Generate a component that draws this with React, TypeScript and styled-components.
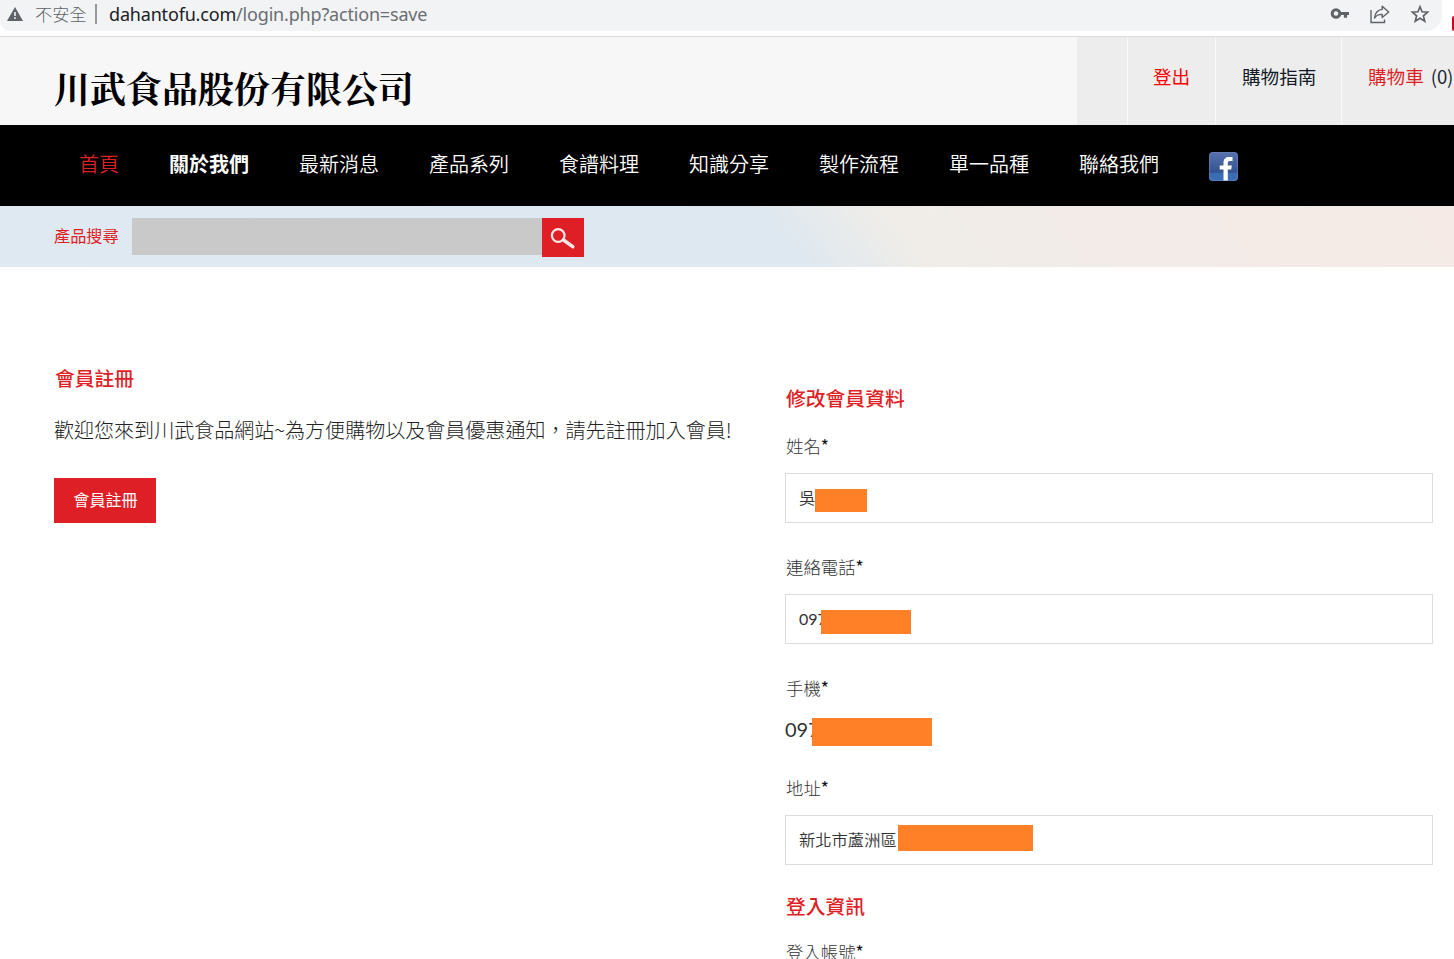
import React from "react";
import styled, { createGlobalStyle } from "styled-components";

const GlobalStyle = createGlobalStyle`
  * { box-sizing: border-box; }
  html, body { margin: 0; padding: 0; }
  body {
    width: 1454px;
    height: 959px;
    overflow: hidden;
    background: #fff;
    color: #333;
    font-family: Lato, "Noto Sans CJK TC", sans-serif;
    font-size: 20px;
  }
`;

const RED = "#df1f26";

const Page = styled.div`
  width: 1454px;
  height: 959px;
  overflow: hidden;
  display: flex;
  flex-direction: column;
`;

const BrowserBar = styled.div`
  height: 37px;
  flex: none;
  display: flex;
  background: #fff;
  border-bottom: 1px solid #d9dadb;
  overflow: hidden;
`;

const AddressBar = styled.div`
  width: 1442px;
  height: 31px;
  display: flex;
  align-items: center;
  padding: 0 12px 4px 7px;
  background: #f1f3f4;
  border-radius: 0 0 16px 10px;
`;

const Insecure = styled.span`
  margin-left: 12px;
  font: 300 17.2px/24px "Noto Sans CJK TC", sans-serif;
  color: #5f6368;
  width: 53px;
  white-space: nowrap;
`;

const Divider = styled.i`
  width: 2px;
  height: 20px;
  margin: 0 12px 0 7px;
  background: #96999c;
`;

const Url = styled.span`
  flex: 1;
  font: 400 18px/24px "Noto Sans", sans-serif;
  letter-spacing: -0.18px;
  color: #6b6e72;
  b { font-weight: 400; color: #202124; }
`;

const BarIcons = styled.div`
  display: flex;
  align-items: center;
  gap: 20px;
  color: #5f6368;
`;

const ExtensionEdge = styled.i`
  width: 2px;
  height: 15px;
  margin: 16px 0 0 auto;
  border-radius: 2px 0 0 2px;
  background: #d0021b;
`;

const Header = styled.header`
  height: 88px;
  flex: none;
  display: flex;
  justify-content: space-between;
  background: #f7f7f7;
`;

const Logo = styled.h1`
  margin: 0;
  padding: 25px 0 0 54px;
  font: 700 36px/52px "Noto Serif CJK TC", "Noto Sans CJK TC", serif;
  color: #000;
  white-space: nowrap;
`;

const TopLinks = styled.div`
  width: 377px;
  display: flex;
  background: #ededed;
  overflow: hidden;
`;

const TopLink = styled.a<{ $width: number; $color?: string }>`
  flex: 0 0 ${(p) => p.$width}px;
  padding: 25px 0 0 ${(p) => (p.$width === 88 ? 25 : 26)}px;
  border-left: ${(p) => (p.$color ? "1px solid #f9f9f9" : "0")};
  font: 400 18.6px/28px "Noto Sans CJK TC", sans-serif;
  color: ${(p) => p.$color};
  white-space: nowrap;
`;

const CartCount = styled.span`
  margin-left: 7px;
  color: #1d2733;
  letter-spacing: -0.2px;
`;

const Nav = styled.nav`
  height: 81px;
  flex: none;
  display: flex;
  padding-left: 54px;
  background: #000;
`;

const NavItem = styled.a<{ $active?: boolean; $bold?: boolean }>`
  padding: 25px 25px 0;
  font: ${(p) => (p.$bold ? 700 : 350)} 20px/28px "Noto Sans CJK TC", sans-serif;
  color: ${(p) => (p.$active ? RED : "#fff")};
`;

const FacebookLink = styled.a`
  padding: 27px 0 0 25px;
  svg { display: block; }
`;

const SearchBar = styled.form`
  height: 61px;
  flex: none;
  display: flex;
  align-items: flex-start;
  margin: 0;
  padding: 12px 0 0 54px;
  background: linear-gradient(51deg, #dfe9f1 0%, #dee8f0 53.6%, #f0ede8 62%, #f2ebe7 74%, #f5eae6 100%);
`;

const SearchLabel = styled.label`
  width: 78px;
  font: 400 16.2px/34px "Noto Sans CJK TC", sans-serif;
  color: ${RED};
`;

const SearchInput = styled.input`
  width: 410px;
  height: 37px;
  border: 0;
  padding: 0 10px;
  background: #c9c9c9;
  border-radius: 0;
`;

const SearchButton = styled.button`
  width: 42px;
  height: 39px;
  border: 0;
  padding: 0;
  display: flex;
  align-items: center;
  justify-content: center;
  background: ${RED};
`;

const Main = styled.main`
  display: flex;
  flex: 1;
  min-height: 0;
  padding-left: 54px;
`;

const Intro = styled.section`
  width: 731px;
  padding-top: 97px;
`;

const Title = styled.h2`
  margin: 0;
  padding-left: 1px;
  font: 500 19.8px/28px "Noto Sans CJK TC", sans-serif;
  color: ${RED};
`;

const Welcome = styled.p`
  margin: 24px 0 0;
  font: 300 20.05px/28px "Noto Sans CJK TC", sans-serif;
  color: #222;
  white-space: nowrap;
`;

const RegisterButton = styled.button`
  display: block;
  width: 102px;
  height: 45px;
  margin-top: 34px;
  padding: 0 0 3px 1px;
  border: 0;
  background: ${RED};
  color: #fff;
  font: 400 16.1px/24px "Noto Sans CJK TC", sans-serif;
`;

const MemberForm = styled.section`
  width: 648px;
  padding-top: 117px;
`;

const Field = styled.div<{ $height: number }>`
  height: ${(p) => p.$height}px;
`;

const Label = styled.label`
  display: block;
  height: 25px;
  padding-left: 1px;
  font: 300 17.4px/23px "Noto Sans CJK TC", sans-serif;
  color: #333;
  span { font-weight: 400; color: #111; }
`;

const Box = styled.div`
  height: 50px;
  margin-top: 14px;
  padding-left: 13px;
  display: flex;
  align-items: center;
  border: 1px solid #dcdcdc;
  font: 400 16px/24px Lato, "Noto Sans CJK TC", sans-serif;
  color: #333;
`;

const PlainValue = styled.div`
  height: 36px;
  margin-top: 10px;
  display: flex;
  align-items: center;
  font-size: 20px;
  color: #333;
`;

const Clip = styled.span<{ $width: number; $cjk?: boolean }>`
  width: ${(p) => p.$width}px;
  overflow: hidden;
  white-space: nowrap;
  font-weight: ${(p) => (p.$cjk ? 350 : 400)};
  font-size: ${(p) => (p.$cjk ? "16.3px" : "inherit")};
`;

const Mask = styled.i<{ $width: number; $height: number; $shift?: number }>`
  width: ${(p) => p.$width}px;
  height: ${(p) => p.$height}px;
  margin-top: ${(p) => p.$shift ?? 0}px;
  background: #ff8027;
`;

const navItems = ["首頁", "關於我們", "最新消息", "產品系列", "食譜料理", "知識分享", "製作流程", "單一品種", "聯絡我們"];

const Required = ({ children }: { children: string }) => (
  <Label>
    {children}
    <span>*</span>
  </Label>
);

export default function App() {
  return (
    <Page>
      <GlobalStyle />
      <BrowserBar>
        <AddressBar>
          <svg width="16" height="14" viewBox="0 0 16 14">
            <path d="M8 0 16 14H0Z" fill="#5f6368" />
            <path d="M7.2 5h1.6v4H7.2zM7.2 10.3h1.6V12H7.2z" fill="#f1f3f4" />
          </svg>
          <Insecure>不安全</Insecure>
          <Divider />
          <Url>
            <b>dahantofu.com</b>/login.php?action=save
          </Url>
          <BarIcons>
            <svg width="20" height="20" viewBox="0 0 20 20" fill="none" stroke="currentColor">
              <circle cx="6" cy="9.5" r="3.8" strokeWidth="3" />
              <path d="M10 9.5h9M15.5 9.5v4.2" strokeWidth="3.2" />
            </svg>
            <svg width="20" height="20" viewBox="0 0 20 20" fill="none" stroke="currentColor" strokeWidth="1.4">
              <path d="M1 6v12.5h13.5V15.5" />
              <path d="M12.2 2.3 18.7 8l-6.5 5.5V10.4C8.5 10.2 6.3 11.4 4.5 14 5 9 7.5 6.1 12.2 5.4Z" strokeLinejoin="round" />
            </svg>
            <svg width="20" height="20" viewBox="0 0 20 20" fill="none" stroke="currentColor" strokeWidth="1.7">
              <path d="m10 2.7 2.1 5.1 5.5.4-4.2 3.6 1.3 5.4L10 14.3l-4.7 2.9 1.3-5.4-4.2-3.6 5.5-.4Z" />
            </svg>
          </BarIcons>
        </AddressBar>
        <ExtensionEdge />
      </BrowserBar>

      <Header>
        <Logo>川武食品股份有限公司</Logo>
        <TopLinks>
          <TopLink $width={50} />
          <TopLink $width={88} $color="#ff0000">登出</TopLink>
          <TopLink $width={126} $color="#111a26">購物指南</TopLink>
          <TopLink $width={113} $color={RED}>
            購物車<CartCount>(0)</CartCount>
          </TopLink>
        </TopLinks>
      </Header>

      <Nav>
        {navItems.map((item, i) => (
          <NavItem key={item} $active={i === 0} $bold={i === 1}>
            {item}
          </NavItem>
        ))}
        <FacebookLink>
          <svg width="29" height="29" viewBox="0 0 29 29">
            <defs>
              <linearGradient id="fb" x1="0" y1="0" x2="0" y2="1">
                <stop offset="0" stopColor="#5872ab" />
                <stop offset="0.65" stopColor="#355696" />
              </linearGradient>
            </defs>
            <rect width="29" height="29" rx="4" fill="url(#fb)" />
            <path d="M0 21h29v4a4 4 0 0 1-4 4H4a4 4 0 0 1-4-4Z" fill="#3b6db5" />
            <rect x="0.5" y="0.5" width="28" height="28" rx="3.5" fill="none" stroke="#7b93c4" strokeOpacity="0.4" />
            <path d="M14.5 28.5V17.6h-3.8v-4h3.8v-2.8C14.5 7 16.7 5 20.1 5h3.4v4h-2.6c-1.6 0-2.1.7-2.1 2.1v2.5h4l-.6 4h-3.4v10.9Z" fill="#fff" />
          </svg>
        </FacebookLink>
      </Nav>

      <SearchBar>
        <SearchLabel>產品搜尋</SearchLabel>
        <SearchInput />
        <SearchButton type="button">
          <svg width="26" height="22" viewBox="0 0 26 22" fill="none" stroke="#f6e6e6">
            <circle cx="8.2" cy="8.5" r="6.3" strokeWidth="2.2" />
            <path d="m13.5 13 9.2 6.6" strokeWidth="3.6" strokeLinecap="round" />
          </svg>
        </SearchButton>
      </SearchBar>

      <Main>
        <Intro>
          <Title>會員註冊</Title>
          <Welcome>歡迎您來到川武食品網站~為方便購物以及會員優惠通知，請先註冊加入會員!</Welcome>
          <RegisterButton>會員註冊</RegisterButton>
        </Intro>
        <MemberForm>
          <Title>修改會員資料</Title>
          <Field $height={22} />
          <Field $height={121}>
            <Required>姓名</Required>
            <Box>
              <Clip $width={16} $cjk>吳</Clip>
              <Mask $width={52} $height={23} $shift={5} />
            </Box>
          </Field>
          <Field $height={121}>
            <Required>連絡電話</Required>
            <Box>
              <Clip $width={22}>097</Clip>
              <Mask $width={90} $height={24} $shift={6} />
            </Box>
          </Field>
          <Field $height={100}>
            <Required>手機</Required>
            <PlainValue>
              <Clip $width={27}>097</Clip>
              <Mask $width={120} $height={28} $shift={6} />
            </PlainValue>
          </Field>
          <Field $height={116}>
            <Required>地址</Required>
            <Box>
              <Clip $width={99} $cjk>新北市蘆洲區</Clip>
              <Mask $width={135} $height={26} $shift={-4} />
            </Box>
          </Field>
          <Title>登入資訊</Title>
          <Field $height={20} />
          <Required>登入帳號</Required>
        </MemberForm>
      </Main>
    </Page>
  );
}
